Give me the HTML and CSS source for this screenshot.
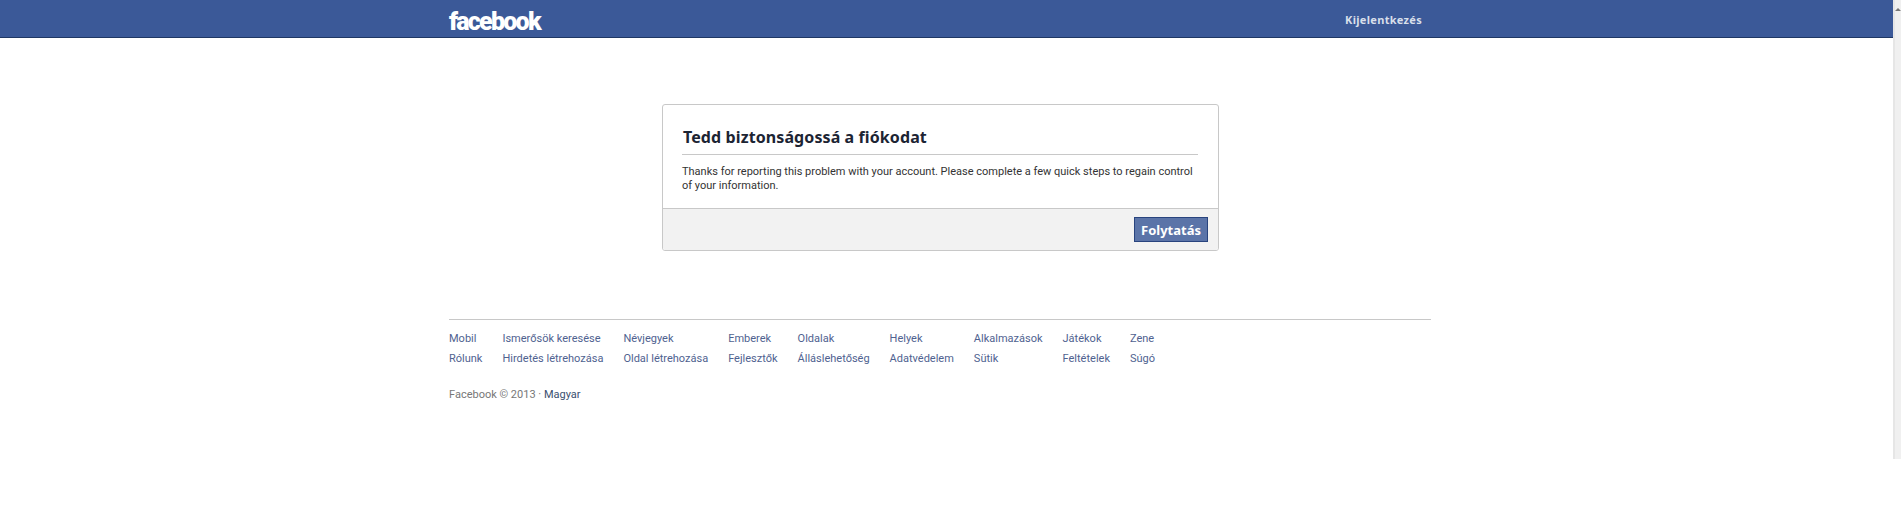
FILE: index.html
```html
<!DOCTYPE html>
<html lang="hu">
<head>
<meta charset="utf-8">
<title>Facebook</title>
<link rel="stylesheet" href="styles.css">
</head>
<body>
<div class="scrollbar"><span class="arrow"></span></div>
<header class="topbar">
  <div class="topbar-inner">
    <a class="logo" href="#">facebook</a>
    <a class="logout" href="#">Kijelentkezés</a>
  </div>
</header>
<main class="main">
  <section class="card">
    <div class="card-body">
      <h1 class="card-title">Tedd biztonságossá a fiókodat</h1>
      <p class="card-text">Thanks for reporting this problem with your account. Please complete a few quick steps to regain control of your information.</p>
    </div>
    <div class="card-foot">
      <button class="btn" type="button">Folytatás</button>
    </div>
  </section>
</main>
<footer class="footer">
  <div class="links">
    <div class="col"><a href="#">Mobil</a><a href="#">Rólunk</a></div>
    <div class="col"><a href="#">Ismerősök keresése</a><a href="#">Hirdetés létrehozása</a></div>
    <div class="col"><a href="#">Névjegyek</a><a href="#">Oldal létrehozása</a></div>
    <div class="col"><a href="#">Emberek</a><a href="#">Fejlesztők</a></div>
    <div class="col"><a href="#">Oldalak</a><a href="#">Álláslehetőség</a></div>
    <div class="col"><a href="#">Helyek</a><a href="#">Adatvédelem</a></div>
    <div class="col"><a href="#">Alkalmazások</a><a href="#">Sütik</a></div>
    <div class="col"><a href="#">Játékok</a><a href="#">Feltételek</a></div>
    <div class="col"><a href="#">Zene</a><a href="#">Súgó</a></div>
  </div>
  <p class="copy">Facebook © 2013 · <a href="#">Magyar</a></p>
</footer>
</body>
</html>
```
FILE: styles.css
```css
html, body { margin: 0; padding: 0; height: 531px; overflow: hidden; background: #fff; }
body { font-family: Roboto, "Noto Sans", sans-serif; font-size: 11px; letter-spacing: 0; color: #333; position: relative; }
a { text-decoration: none; color: #3b5998; }
.scrollbar { position: absolute; top: 0; right: 0; width: 8px; height: 459px; background: #f0f0f0; border-left: 2px solid #e6e6e6; box-sizing: border-box; z-index: 2; }
.arrow { display: block; margin: 8px 0 0 0; width: 0; height: 0; border: 3px solid transparent; border-top: 0; border-bottom: 3px solid #777; }
.topbar { height: 37px; background: #3b5998; border-bottom: 1px solid #1f3764; }
.topbar-inner { width: 982px; margin-left: 449px; height: 37px; display: flex; justify-content: space-between; align-items: center; box-sizing: border-box; padding: 3px 9px 0 0; }
.logo { font-family: Roboto, "Liberation Sans", sans-serif; font-weight: 900; font-size: 25px; letter-spacing: -1.75px; color: #fff; line-height: 34px; position: relative; top: 2px; }
.logout { font-family: "Noto Sans", sans-serif; font-weight: 700; font-size: 11px; letter-spacing: 0.3px; color: #d8dfea; line-height: 34px; }
.main { display: flex; margin-left: 662px; padding-top: 66px; }
.card { width: 557px; box-sizing: border-box; border: 1px solid #c8c8c8; border-radius: 3px; overflow: hidden; }
.card-body { padding: 20px 20px 15px 19px; }
.card-title { margin: 0; font-family: "Noto Sans", sans-serif; font-size: 16px; font-weight: 700; letter-spacing: 0.1px; line-height: 24px; color: #1c2433; padding: 0 0 5px 1px; border-bottom: 1px solid #c8c8c8; }
.card-text { margin: 10px 0 0; line-height: 14px; color: #333; }
.card-foot { background: #f2f2f2; border-top: 1px solid #c8c8c8; height: 41px; display: flex; justify-content: flex-end; align-items: center; padding-right: 10px; }
.btn { width: 74px; font-family: "Noto Sans", sans-serif; font-size: 13px; font-weight: 700; color: #fff; background: #5b74a8; border: 1px solid #29447e; padding: 0; height: 25px; }
.footer { width: 982px; margin: 68px 0 0 449px; border-top: 1px solid #c8c8c8; padding-top: 9px; }
.links { display: flex; gap: 20px; }
.col { display: flex; flex-direction: column; }
.col a { line-height: 20px; color: #4f6290; }
.copy { margin: 19px 0 0; color: #777; line-height: 14px; }
.copy a { color: #3b5070; }
```
